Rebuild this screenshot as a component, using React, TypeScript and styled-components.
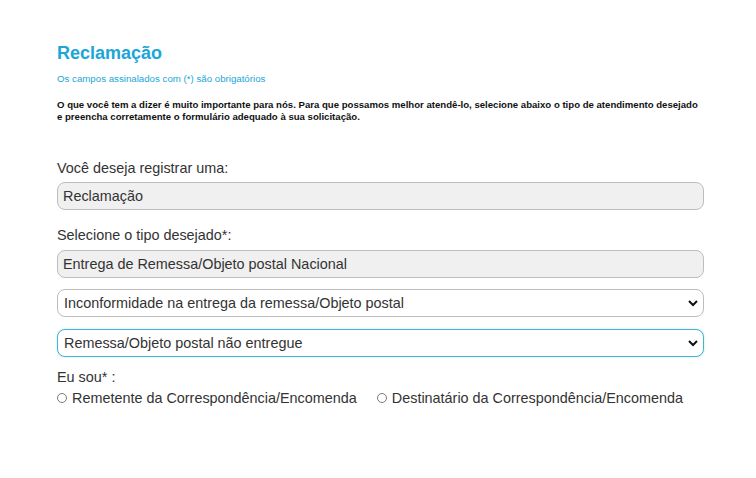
import { FC } from "react";
import styled, { createGlobalStyle } from "styled-components";

const GlobalStyle = createGlobalStyle`
  html, body {
    margin: 0;
    padding: 0;
    background: #fff;
    font-family: "Liberation Sans", Arial, sans-serif;
  }
`;

const Page = styled.div`
  width: 647px;
  padding: 42px 0 0 57px;
  display: flex;
  flex-direction: column;
`;

const Title = styled.h1`
  margin: 0;
  font-size: 18px;
  line-height: 22px;
  font-weight: bold;
  color: #1ba6d8;
`;

const Required = styled.p`
  margin: 9px 0 0;
  font-size: 9.7px;
  line-height: 11px;
  color: #1ba6d8;
`;

const Intro = styled.p`
  width: 660px;
  margin: 15px 0 0;
  font-size: 9.6px;
  line-height: 12px;
  font-weight: bold;
  color: #111;
`;

const Label = styled.div<{ $top: number }>`
  margin-top: ${(p) => p.$top}px;
  font-size: 14.4px;
  line-height: 17px;
  color: #333;
`;

const Field = styled.div<{ $top: number }>`
  position: relative;
  margin-top: ${(p) => p.$top}px;
  height: 28px;
`;

const ReadOnly = styled.div`
  box-sizing: border-box;
  height: 100%;
  padding: 0 5px;
  display: flex;
  align-items: center;
  border: 1px solid #bdbdbd;
  border-radius: 8px;
  background: #f0f0f0;
  font-size: 14.4px;
  color: #333;
`;

const Select = styled.div<{ $focus?: boolean }>`
  box-sizing: border-box;
  height: 100%;
  padding: 0 6px;
  display: flex;
  align-items: center;
  border: 1px solid ${(p) => (p.$focus ? "#4ab3d3" : "#bdbdbd")};
  border-radius: 8px;
  background: #fff;
  box-shadow: ${(p) => (p.$focus ? "0 0 2px rgba(74,179,211,0.45)" : "none")};
  font-size: 14.4px;
  color: #333;
`;

const Chevron = styled.svg`
  position: absolute;
  right: 6px;
  top: 10px;
  width: 10px;
  height: 8px;
  pointer-events: none;
`;

const RadioRow = styled.div`
  margin-top: 4px;
  display: flex;
  align-items: center;
  gap: 20px;
  font-size: 14.4px;
  color: #333;
`;

const RadioLabel = styled.label`
  display: flex;
  align-items: center;
  gap: 5px;
`;

const Radio = styled.span`
  box-sizing: border-box;
  width: 10px;
  height: 10px;
  border: 1px solid #7a7a7a;
  border-radius: 50%;
`;

const ChevronIcon: FC = () => (
  <Chevron viewBox="0 0 10 8">
    <path d="M1 2l4 4 4-4" fill="none" stroke="#111" strokeWidth="2" />
  </Chevron>
);

const App: FC = () => (
  <>
    <GlobalStyle />
    <Page>
      <Title>Reclamação</Title>
      <Required>Os campos assinalados com (*) são obrigatórios</Required>
      <Intro>
        O que você tem a dizer é muito importante para nós. Para que possamos
        melhor atendê-lo, selecione abaixo o tipo de atendimento desejado
        <br />e preencha corretamente o formulário adequado à sua solicitação.
      </Intro>

      <Label $top={37}>Você deseja registrar uma:</Label>
      <Field $top={5}>
        <ReadOnly>Reclamação</ReadOnly>
      </Field>

      <Label $top={17}>Selecione o tipo desejado*:</Label>
      <Field $top={6}>
        <ReadOnly>Entrega de Remessa/Objeto postal Nacional</ReadOnly>
      </Field>
      <Field $top={11}>
        <Select>Inconformidade na entrega da remessa/Objeto postal</Select>
        <ChevronIcon />
      </Field>
      <Field $top={12}>
        <Select $focus>Remessa/Objeto postal não entregue</Select>
        <ChevronIcon />
      </Field>

      <Label $top={12}>Eu sou* :</Label>
      <RadioRow>
        <RadioLabel>
          <Radio />
          Remetente da Correspondência/Encomenda
        </RadioLabel>
        <RadioLabel>
          <Radio />
          Destinatário da Correspondência/Encomenda
        </RadioLabel>
      </RadioRow>
    </Page>
  </>
);

export default App;
